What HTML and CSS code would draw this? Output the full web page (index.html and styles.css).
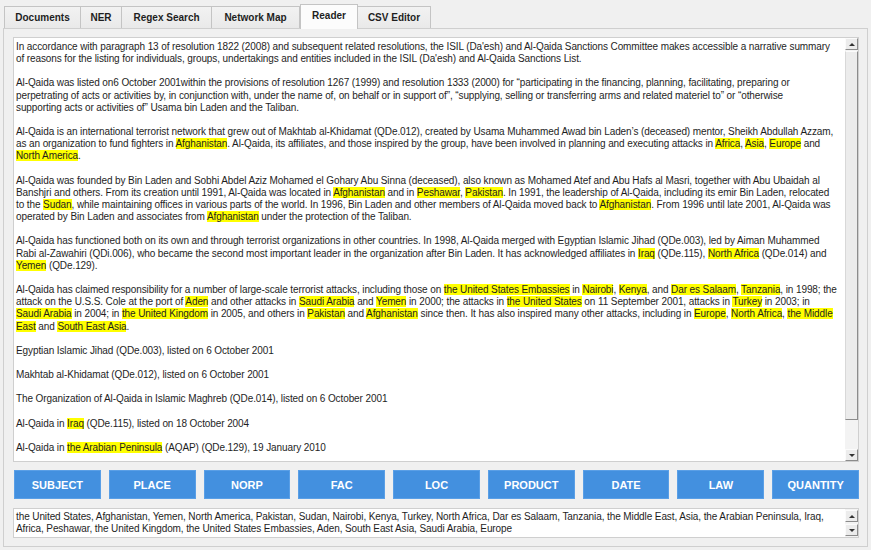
FILE: index.html
```html
<!DOCTYPE html>
<html lang="en">
  <head>
    <meta charset="utf-8" />
    <title>Reader</title>
    <link rel="stylesheet" href="styles.css">
  </head>
  <body>
    <div class="tabs">
      <div class="tab t-docs">Documents</div>
      <div class="tab t-ner">NER</div>
      <div class="tab t-regex">Regex Search</div>
      <div class="tab t-net">Network Map</div>
      <div class="tab t-reader active">Reader</div>
      <div class="tab t-csv">CSV Editor</div>
    </div>

    <div class="pane">
      <div class="reader">
        <div class="doc">
          <p>In accordance with paragraph 13 of resolution 1822 (2008) and subsequent related resolutions, the ISIL (Da'esh) and Al-Qaida Sanctions Committee makes accessible a narrative summary<br>of reasons for the listing for individuals, groups, undertakings and entities included in the ISIL (Da'esh) and Al-Qaida Sanctions List.</p>
          <p>Al-Qaida was listed on6 October 2001within the provisions of resolution 1267 (1999) and resolution 1333 (2000) for “participating in the financing, planning, facilitating, preparing or<br>perpetrating of acts or activities by, in conjunction with, under the name of, on behalf or in support of”, “supplying, selling or transferring arms and related materiel to” or “otherwise<br>supporting acts or activities of” Usama bin Laden and the Taliban.</p>
          <p>Al-Qaida is an international terrorist network that grew out of Makhtab al-Khidamat (QDe.012), created by Usama Muhammed Awad bin Laden’s (deceased) mentor, Sheikh Abdullah Azzam,<br>as an organization to fund fighters in <mark>Afghanistan</mark>. Al-Qaida, its affiliates, and those inspired by the group, have been involved in planning and executing attacks in <mark>Africa</mark>, <mark>Asia</mark>, <mark>Europe</mark> and<br><mark>North America</mark>.</p>
          <p>Al-Qaida was founded by Bin Laden and Sobhi Abdel Aziz Mohamed el Gohary Abu Sinna (deceased), also known as Mohamed Atef and Abu Hafs al Masri, together with Abu Ubaidah al<br>Banshjri and others. From its creation until 1991, Al-Qaida was located in <mark>Afghanistan</mark> and in <mark>Peshawar</mark>, <mark>Pakistan</mark>. In 1991, the leadership of Al-Qaida, including its emir Bin Laden, relocated<br>to the <mark>Sudan</mark>, while maintaining offices in various parts of the world. In 1996, Bin Laden and other members of Al-Qaida moved back to <mark>Afghanistan</mark>. From 1996 until late 2001, Al-Qaida was<br>operated by Bin Laden and associates from <mark>Afghanistan</mark> under the protection of the Taliban.</p>
          <p>Al-Qaida has functioned both on its own and through terrorist organizations in other countries. In 1998, Al-Qaida merged with Egyptian Islamic Jihad (QDe.003), led by Aiman Muhammed<br>Rabi al-Zawahiri (QDi.006), who became the second most important leader in the organization after Bin Laden. It has acknowledged affiliates in <mark>Iraq</mark> (QDe.115), <mark>North Africa</mark> (QDe.014) and<br><mark>Yemen</mark> (QDe.129).</p>
          <p>Al-Qaida has claimed responsibility for a number of large-scale terrorist attacks, including those on <mark>the United States Embassies</mark> in <mark>Nairobi</mark>, <mark>Kenya</mark>, and <mark>Dar es Salaam</mark>, <mark>Tanzania</mark>, in 1998; the<br>attack on the U.S.S. Cole at the port of <mark>Aden</mark> and other attacks in <mark>Saudi Arabia</mark> and <mark>Yemen</mark> in 2000; the attacks in <mark>the United States</mark> on 11 September 2001, attacks in <mark>Turkey</mark> in 2003; in<br><mark>Saudi Arabia</mark> in 2004; in <mark>the United Kingdom</mark> in 2005, and others in <mark>Pakistan</mark> and <mark>Afghanistan</mark> since then. It has also inspired many other attacks, including in <mark>Europe</mark>, <mark>North Africa</mark>, <mark>the Middle</mark><br><mark>East</mark> and <mark>South East Asia</mark>.</p>
          <p>Egyptian Islamic Jihad (QDe.003), listed on 6 October 2001</p>
          <p>Makhtab al-Khidamat (QDe.012), listed on 6 October 2001</p>
          <p>The Organization of Al-Qaida in Islamic Maghreb (QDe.014), listed on 6 October 2001</p>
          <p>Al-Qaida in <mark>Iraq</mark> (QDe.115), listed on 18 October 2004</p>
          <p>Al-Qaida in <mark>the Arabian Peninsula</mark> (AQAP) (QDe.129), 19 January 2010</p>
        </div>
        <div class="vscroll">
          <div class="arrow up"></div>
          <div class="track"><div class="thumb"></div></div>
          <div class="arrow down"></div>
        </div>
      </div>

      <div class="labels">
        <button class="label-btn">SUBJECT</button>
        <button class="label-btn">PLACE</button>
        <button class="label-btn">NORP</button>
        <button class="label-btn">FAC</button>
        <button class="label-btn">LOC</button>
        <button class="label-btn">PRODUCT</button>
        <button class="label-btn">DATE</button>
        <button class="label-btn">LAW</button>
        <button class="label-btn">QUANTITY</button>
      </div>

      <div class="found">
        <div class="found-text">the United States, Afghanistan, Yemen, North America, Pakistan, Sudan, Nairobi, Kenya, Turkey, North Africa, Dar es Salaam, Tanzania, the Middle East, Asia, the Arabian Peninsula, Iraq,<br>Africa, Peshawar, the United Kingdom, the United States Embassies, Aden, South East Asia, Saudi Arabia, Europe</div>
        <div class="vscroll small">
          <div class="arrow up"></div>
          <div class="arrow down"></div>
        </div>
      </div>
    </div>
  </body>
</html>
```

FILE: styles.css
```css
body {
  margin: 0;
  background: #f0f0f0;
  font-family: "Liberation Sans", Arial, sans-serif;
  color: #1e1e1e;
}
.tabs {
  display: flex;
  align-items: flex-end;
  height: 28px;
  padding-left: 4px;
}
.tab {
  box-sizing: border-box;
  height: 22px;
  border: 1px solid #c4c4c4;
  border-bottom: none;
  background: linear-gradient(#f2f2f2, #e9e9e9);
  font-size: 10px;
  font-weight: bold;
  color: #1e1e1e;
  display: flex;
  align-items: center;
  justify-content: center;
}
.tab + .tab {
  border-left: none;
}
.tab.active {
  height: 25px;
  background: #fcfcfc;
  border-left: 1px solid #c4c4c4;
  margin-bottom: -1px;
  padding-bottom: 3px;
  position: relative;
  z-index: 1;
}
.t-docs { width: 77px; }
.t-ner { width: 41px; }
.t-regex { width: 90px; }
.t-net { width: 88px; }
.t-reader { width: 58px; }
.t-csv { width: 73px; }

.pane {
  margin: 0 3px;
  height: 519px;
  box-sizing: border-box;
  border: 1px solid #cfcfcf;
  background: #f0f0f0;
  padding: 8px 8px 8px 9px;
  display: flex;
  flex-direction: column;
}
.reader {
  height: 425px;
  box-sizing: border-box;
  border: 1px solid #cfcfcf;
  background: #fff;
  display: flex;
}
.doc {
  flex: 1;
  padding: 3px 0 0 2px;
  font-size: 10px;
  line-height: 12.15px;
  letter-spacing: -0.1px;
  white-space: nowrap;
  overflow: hidden;
}
.doc p {
  margin: 0 0 12.15px 0;
}
mark {
  background: #ffff00;
  color: inherit;
}

.vscroll {
  width: 13px;
  display: flex;
  flex-direction: column;
  background: #f3f3f3;
}
.arrow {
  box-sizing: border-box;
  height: 12px;
  border: 1px solid;
  border-color: #fbfbfb #8c8c8c #8c8c8c #fbfbfb;
  background: #ececec;
  display: flex;
  align-items: center;
  justify-content: center;
}
.arrow::after {
  content: "";
  width: 0;
  height: 0;
  border-left: 3px solid transparent;
  border-right: 3px solid transparent;
}
.arrow.up::after {
  border-bottom: 3px solid #333;
}
.arrow.down::after {
  border-top: 3px solid #333;
}
.track {
  flex: 1;
  padding-top: 1px;
}
.thumb {
  box-sizing: border-box;
  height: 369px;
  border: 1px solid;
  border-color: #fbfbfb #8c8c8c #8c8c8c #d8d8d8;
  background: #ececec;
}

.labels {
  display: flex;
  gap: 8px;
  margin: 8px 0 0 1px;
  height: 29px;
}
.label-btn {
  flex: 1;
  border: 1px solid #5a9fe6;
  background: #4390df;
  color: #fff;
  font-family: "Liberation Sans", Arial, sans-serif;
  font-size: 11px;
  font-weight: bold;
  padding: 0;
}

.found {
  margin-top: 9px;
  height: 30px;
  box-sizing: border-box;
  border: 1px solid #cfcfcf;
  background: #fff;
  display: flex;
}
.found-text {
  flex: 1;
  padding: 2px 0 0 2px;
  font-size: 10px;
  line-height: 12px;
  letter-spacing: -0.1px;
  white-space: nowrap;
  overflow: hidden;
}
.vscroll.small {
  justify-content: space-between;
  padding: 1px 0;
}
```
